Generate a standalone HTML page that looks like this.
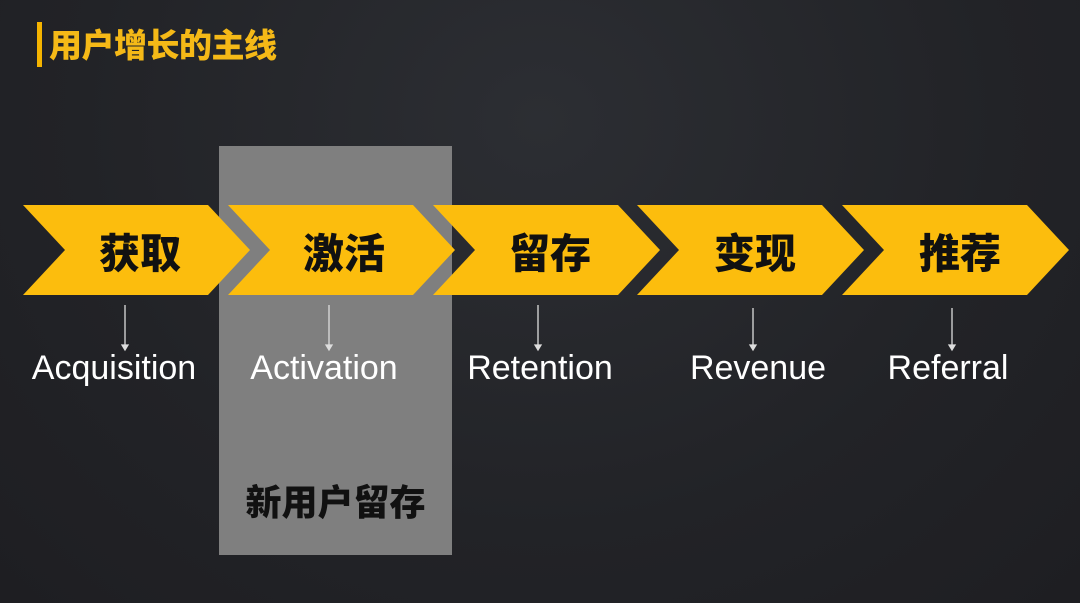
<!DOCTYPE html>
<html><head><meta charset="utf-8"><style>
body{margin:0;width:1080px;height:603px;overflow:hidden;background:radial-gradient(ellipse at 50% 20%,#2c2e33 0%,#222327 60%,#1e1e22 100%);font-family:"Liberation Sans","Noto Sans CJK SC",sans-serif;position:relative}
.a{position:absolute}
.cn{font-family:"Noto Sans CJK SC",sans-serif;font-weight:900;color:#111;font-size:41px;text-align:center;width:200px;line-height:1}
.en{color:#fff;font-size:34px;text-align:center;width:240px;line-height:1}
</style></head><body>
<div class="a" style="left:37px;top:22px;width:5px;height:45px;background:#f5b400"></div>
<div class="a" style="left:49px;top:27px;font-family:'Noto Sans CJK SC',sans-serif;font-weight:900;font-size:33px;color:#f5b917;line-height:1;letter-spacing:-0.5px">用户增长的主线</div>
<div class="a" style="left:219px;top:146px;width:233px;height:409px;background:#7f7f7f"></div>
<svg class="a" style="left:0;top:0" width="1080" height="603">
<g fill="#fcbd0d">
<polygon points="23,205 208,205 250,250 208,295 23,295 65,250"/>
<polygon points="228,205 413,205 455,250 413,295 228,295 270,250"/>
<polygon points="433,205 618,205 660,250 618,295 433,295 475,250"/>
<polygon points="637,205 822,205 864,250 822,295 637,295 679,250"/>
<polygon points="842,205 1027,205 1069,250 1027,295 842,295 884,250"/>
</g>
<g stroke="#ddd" stroke-width="1.3" fill="#ddd">
<line x1="125" y1="305" x2="125" y2="346"/><polygon points="122,345 128,345 125,350"/>
<line x1="329" y1="305" x2="329" y2="346"/><polygon points="326,345 332,345 329,350"/>
<line x1="538" y1="305" x2="538" y2="346"/><polygon points="535,345 541,345 538,350"/>
<line x1="753" y1="308" x2="753" y2="346"/><polygon points="750,345 756,345 753,350"/>
<line x1="952" y1="308" x2="952" y2="346"/><polygon points="949,345 955,345 952,350"/>
</g>
</svg>
<div class="a cn" style="left:40px;top:230px">获取</div>
<div class="a cn" style="left:244px;top:230px">激活</div>
<div class="a cn" style="left:450px;top:230px">留存</div>
<div class="a cn" style="left:655px;top:230px">变现</div>
<div class="a cn" style="left:860px;top:230px">推荐</div>
<div class="a en" style="left:-6px;top:351px">Acquisition</div>
<div class="a en" style="left:204px;top:351px">Activation</div>
<div class="a en" style="left:420px;top:351px">Retention</div>
<div class="a en" style="left:638px;top:351px">Revenue</div>
<div class="a en" style="left:828px;top:351px">Referral</div>
<div class="a" style="left:219px;top:482px;width:233px;text-align:center;font-family:'Noto Sans CJK SC',sans-serif;font-weight:900;font-size:36px;color:#111;line-height:1">新用户留存</div>
</body></html>
